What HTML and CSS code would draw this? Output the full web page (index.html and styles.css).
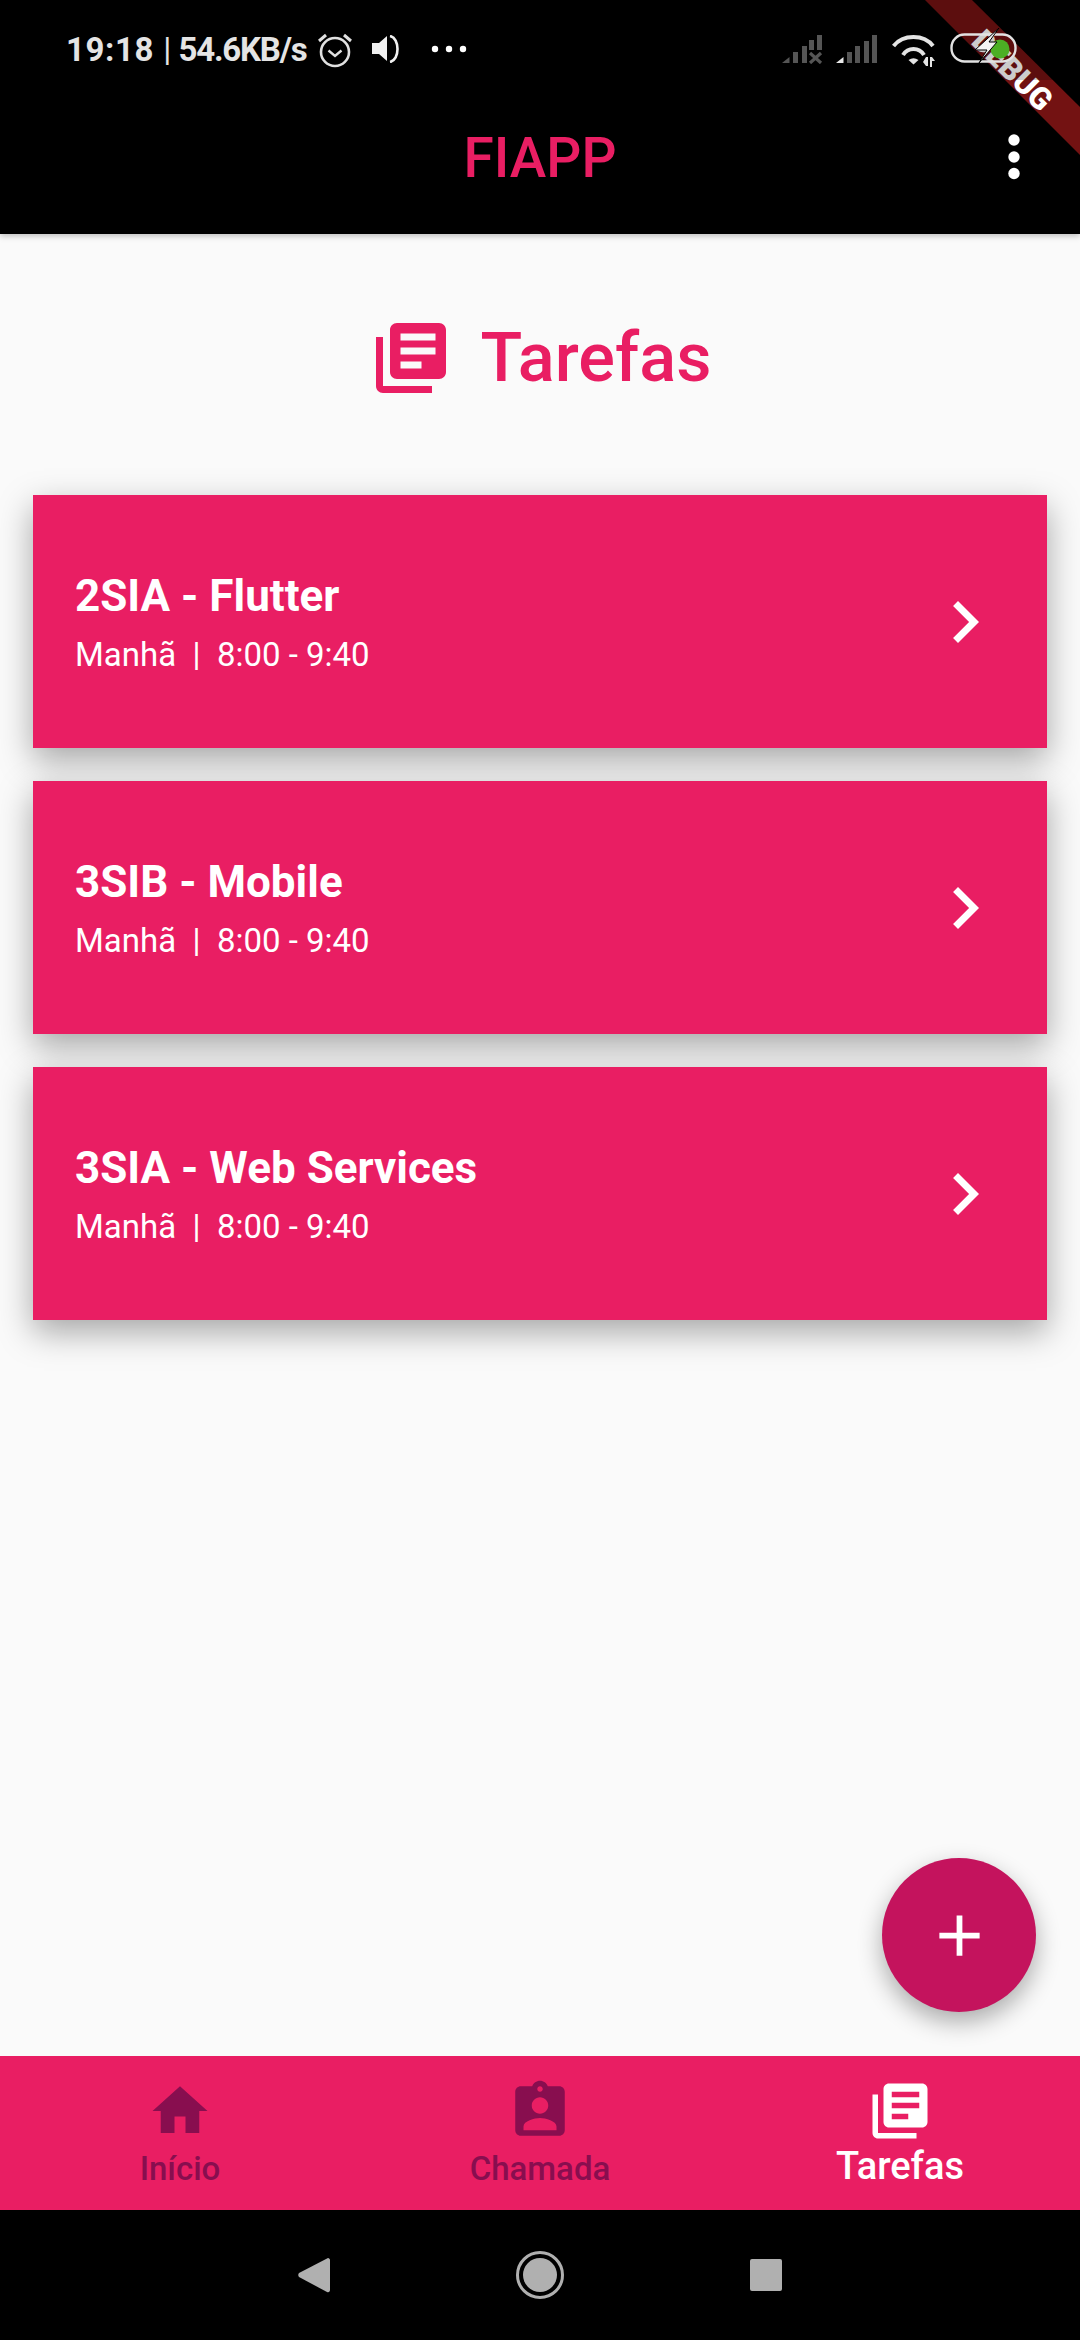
FILE: index.html
```html
<!DOCTYPE html>
<html>
	<head>
		<meta charset="utf-8">
		<title>FIAPP</title>
		<link rel="stylesheet" href="styles.css">
	</head>
	<body>
		<div class="screen">
			<div class="statusbar">
				<span class="clock"><b class="time">19:18</b> <i>|</i> <b class="speed">54.6KB/s</b></span>
				<svg class="ic-alarm" viewBox="0 0 36 36">
					<circle cx="18" cy="20" r="14" fill="none" stroke="#e0e0e0" stroke-width="2.6"/>
					<path d="M11.500 18.500l6.500 5.500 6.500-5.500" fill="none" stroke="#e0e0e0" stroke-width="2.4"/>
					<path d="M2 9l7-6M34 9l-7-6" fill="none" stroke="#e0e0e0" stroke-width="3"/>
				</svg>
				<svg class="ic-volume" viewBox="0 0 30 28">
					<path d="M1 8h7l8-7v25l-8-7H1z" fill="#f0f0f0"/>
					<path d="M19 1c10 2 10 24 0 26" fill="none" stroke="#f0f0f0" stroke-width="2.600"/>
				</svg>
				<svg class="ic-more" viewBox="0 0 36 8">
					<circle cx="4" cy="4" r="3.200" fill="#fff"/>
					<circle cx="18" cy="4" r="3.200" fill="#fff"/>
					<circle cx="32" cy="4" r="3.200" fill="#fff"/>
				</svg>
				<span class="status-right">
					<svg class="ic-signal" viewBox="0 0 41 30">
						<path d="M0 29l7.500-6v6z" fill="#555"/>
						<path d="M11 18h5v11h-5zM20 12h5v17h-5zM27 6h5v10h-5zM35 1h5v15h-5z" fill="#555"/>
						<path d="M28 19l11 10M39 19L28 29" stroke="#555" stroke-width="3.200"/>
					</svg>
					<svg class="ic-signal" viewBox="0 0 41 30">
						<path d="M0 29l7.500-6v6z" fill="#e8e8e8"/>
						<path d="M11 18h5v11h-5zM19 12h5v17h-5zM28 7h5v22h-5zM36 1h5v28h-5z" fill="#555"/>
					</svg>
					<svg class="ic-wifi" viewBox="0 0 44 34">
						<path d="M1.500 13C11 1 32 1 41 13" fill="none" stroke="#e4e4e4" stroke-width="4"/>
						<path d="M11 22c5-8 16-8 21 0" fill="none" stroke="#e4e4e4" stroke-width="4"/>
						<path d="M16.500 27q5-3.500 10 0l-5 4.500z" fill="#e4e4e4"/>
						<path d="M34 24h2v9h-2l-3-4zM38 24h2l3 4h-3v6h-2z" fill="#e4e4e4"/>
					</svg>
					<svg class="ic-battery" viewBox="0 0 68 32">
						<rect x="1.500" y="1.500" width="64" height="27" rx="13" fill="none" stroke="#e2e2e2" stroke-width="2.400"/>
						<circle cx="50" cy="16" r="9.500" fill="#4caf24"/>
						<path d="M49-5L25 17h12l-8 13 18-21h-8z" fill="#f4f4f4" stroke="#000" stroke-width="1"/>
					</svg>
				</span>
			</div>

			<header class="toolbar">
				<span></span>
				<h1 class="toolbar-title">FIAPP</h1>
				<svg class="ic-menu" viewBox="0 0 12 46">
					<circle cx="6" cy="6" r="5.700" fill="#fff"/>
					<circle cx="6" cy="23" r="5.700" fill="#fff"/>
					<circle cx="6" cy="39.500" r="5.700" fill="#fff"/>
				</svg>
			</header>

			<main class="content">
				<div class="heading">
					<svg class="ic-heading" viewBox="0 0 24 24"><path d="M4 6H2v14c0 1.100.9 2 2 2h14v-2H4V6zm16-4H8c-1.100 0-2 .9-2 2v12c0 1.100.9 2 2 2h12c1.100 0 2-.9 2-2V4c0-1.100-.9-2-2-2zm-1 9H9V9h10v2zm-4 4H9v-2h6v2zm4-8H9V5h10v2z"/></svg>
					<h2 class="heading-text">Tarefas</h2>
				</div>

				<div class="cards">
					<div class="card">
						<div class="card-text">
							<div class="card-title">2SIA - Flutter</div>
							<div class="card-sub">Manhã &nbsp;|&nbsp; 8:00 - 9:40</div>
						</div>
						<svg class="ic-chevron" viewBox="0 0 24 24"><path d="M8.590 16.590L13.170 12 8.590 7.410 10 6l6 6-6 6-1.410-1.410z"/></svg>
					</div>
					<div class="card">
						<div class="card-text">
							<div class="card-title">3SIB - Mobile</div>
							<div class="card-sub">Manhã &nbsp;|&nbsp; 8:00 - 9:40</div>
						</div>
						<svg class="ic-chevron" viewBox="0 0 24 24"><path d="M8.590 16.590L13.170 12 8.590 7.410 10 6l6 6-6 6-1.410-1.410z"/></svg>
					</div>
					<div class="card">
						<div class="card-text">
							<div class="card-title">3SIA - Web Services</div>
							<div class="card-sub">Manhã &nbsp;|&nbsp; 8:00 - 9:40</div>
						</div>
						<svg class="ic-chevron" viewBox="0 0 24 24"><path d="M8.590 16.590L13.170 12 8.590 7.410 10 6l6 6-6 6-1.410-1.410z"/></svg>
					</div>
				</div>

				<button class="fab">
					<svg class="ic-add" viewBox="0 0 24 24"><path d="M19 13h-6v6h-2v-6H5v-2h6V5h2v6h6v2z"/></svg>
				</button>
			</main>

			<nav class="bottomnav">
				<div class="nav-item">
					<svg class="nav-icon" viewBox="0 0 24 24"><path d="M10 20v-6h4v6h5v-8h3L12 3 2 12h3v8z"/></svg>
					<span class="nav-label">Início</span>
				</div>
				<div class="nav-item">
					<svg class="nav-icon" viewBox="0 0 24 24"><path d="M19 3h-4.180C14.400 1.840 13.300 1 12 1c-1.300 0-2.400.84-2.820 2H5c-1.100 0-2 .9-2 2v14c0 1.100.9 2 2 2h14c1.100 0 2-.9 2-2V5c0-1.100-.9-2-2-2zm-7 0c.55 0 1 .45 1 1s-.45 1-1 1-1-.45-1-1 .45-1 1-1zm0 4c1.660 0 3 1.340 3 3s-1.340 3-3 3-3-1.340-3-3 1.340-3 3-3zm6 12H6v-1.400c0-2 4-3.100 6-3.100s6 1.100 6 3.100V19z"/></svg>
					<span class="nav-label">Chamada</span>
				</div>
				<div class="nav-item active">
					<svg class="nav-icon" viewBox="0 0 24 24"><path d="M4 6H2v14c0 1.100.9 2 2 2h14v-2H4V6zm16-4H8c-1.100 0-2 .9-2 2v12c0 1.100.9 2 2 2h12c1.100 0 2-.9 2-2V4c0-1.100-.9-2-2-2zm-1 9H9V9h10v2zm-4 4H9v-2h6v2zm4-8H9V5h10v2z"/></svg>
					<span class="nav-label">Tarefas</span>
				</div>
			</nav>

			<div class="systemnav">
				<svg class="sys-back" viewBox="0 0 32 36"><path d="M30 1c1 0 2 1 2 2v30c0 1-1 3-3 2L1 20c-1-1-1-3 0-4z"/></svg>
				<svg class="sys-home" viewBox="0 0 48 48">
					<circle cx="24" cy="24" r="22.500" fill="none" stroke="#b0b0b0" stroke-width="3"/>
					<circle cx="24" cy="24" r="17"/>
				</svg>
				<div class="sys-recent"></div>
			</div>

			<svg class="debug-banner" viewBox="920 0 160 160">
				<polygon points="925,0 972,0 1080,107 1080,155" fill="#731212"/>
				<text class="debug-text" transform="translate(1005 78) rotate(45)" text-anchor="middle">DEBUG</text>
			</svg>
		</div>
	</body>
</html>
```

FILE: styles.css
```css
* {
	box-sizing: border-box;
}
html, body {
	margin: 0;
	padding: 0;
}
body {
	font-family: Roboto, "Liberation Sans", sans-serif;
}
svg {
	display: block;
	flex: none;
}
.screen {
	position: relative;
	display: flex;
	flex-direction: column;
	width: 1080px;
	height: 2340px;
	overflow: hidden;
	background: #000;
}

/* status bar, sits on top of the debug ribbon and darkens it */
.statusbar {
	position: relative;
	z-index: 2;
	display: flex;
	align-items: flex-start;
	height: 80px;
	padding: 0 0 0 66px;
	background: rgba(0, 0, 0, .2);
	color: #e4e4e4;
}
.clock {
	margin-top: 30px;
	width: 250px;
	font-size: 33px;
	line-height: 39px;
	white-space: nowrap;
}
.clock b {
	font-weight: 700;
}
.clock .time {
	letter-spacing: .6px;
}
.clock .speed {
	letter-spacing: -1.200px;
}
.clock i {
	font-style: normal;
	font-weight: 400;
	margin: 0 -1px 0 1px;
}
.ic-alarm {
	width: 36px;
	height: 36px;
	margin: 32px 0 0 1px;
}
.ic-volume {
	width: 30px;
	height: 28px;
	margin: 35px 0 0 18px;
}
.ic-more {
	width: 36px;
	height: 8px;
	margin: 45px 0 0 30px;
}
.status-right {
	display: flex;
	align-items: flex-start;
	margin-left: auto;
	padding-right: 62px;
}
.ic-signal {
	width: 41px;
	height: 30px;
	margin: 34px 13px 0 0;
}
.ic-wifi {
	width: 44px;
	height: 34px;
	margin: 33px 14px 0 2px;
}
.ic-battery {
	width: 68px;
	height: 32px;
	margin-top: 33px;
	overflow: visible;
}

.toolbar {
	display: grid;
	grid-template-columns: 1fr auto 1fr;
	align-items: center;
	height: 154px;
	background: #000;
	box-shadow: 0 2px 6px rgba(0, 0, 0, .25);
	position: relative;
	z-index: 1;
}
.toolbar-title {
	margin: 0;
	padding-top: 2px;
	font-size: 55px;
	font-weight: 500;
	color: #e91e63;
}
.ic-menu {
	justify-self: end;
	width: 12px;
	height: 46px;
	margin-right: 60px;
}

.content {
	position: relative;
	flex: 1;
	padding-top: 82px;
	background: #fafafa;
}
.heading {
	display: flex;
	justify-content: center;
	align-items: center;
	gap: 28px;
	height: 84px;
}
.ic-heading {
	width: 84px;
	height: 84px;
	fill: #e91e63;
}
.heading-text {
	margin: -2px 0 0;
	font-size: 68.500px;
	font-weight: 500;
	color: #e91e63;
}
.cards {
	display: flex;
	flex-direction: column;
	gap: 33px;
	margin: 95px 33px 0;
}
.card {
	display: flex;
	align-items: center;
	justify-content: space-between;
	height: 253px;
	padding: 0 40px 0 42px;
	background: #e91e63;
	box-shadow: 0 12px 32px rgba(0, 0, 0, .34);
}
.card-title {
	font-size: 44px;
	font-weight: 700;
	line-height: 52px;
	color: #fff;
}
.card-sub {
	margin-top: 13px;
	font-size: 33px;
	line-height: 39px;
	color: #fff;
}
.ic-chevron {
	width: 84px;
	height: 84px;
	fill: #fff;
}
.fab {
	position: absolute;
	right: 44px;
	bottom: 44px;
	display: flex;
	align-items: center;
	justify-content: center;
	width: 154px;
	height: 154px;
	padding: 0;
	border: none;
	border-radius: 50%;
	background: #c4135d;
	box-shadow: 0 10px 24px rgba(0, 0, 0, .32);
}
.ic-add {
	width: 69px;
	height: 69px;
	fill: #fff;
}

.bottomnav {
	display: flex;
	height: 154px;
	background: #e91e63;
}
.nav-item {
	flex: 1;
	display: flex;
	flex-direction: column;
	align-items: center;
	padding-top: 22px;
	color: #880e4f;
}
.nav-icon {
	width: 66px;
	height: 66px;
	fill: currentColor;
}
.nav-label {
	margin-top: 5px;
	font-size: 33px;
	font-weight: 500;
	line-height: 39px;
}
.nav-item.active {
	color: #fff;
}
.nav-item.active .nav-label {
	margin-top: 0;
	font-size: 38px;
	line-height: 44px;
}

.systemnav {
	display: flex;
	justify-content: center;
	align-items: center;
	gap: 186px;
	height: 130px;
	background: #000;
}
.sys-back {
	width: 32px;
	height: 36px;
	fill: #b0b0b0;
}
.sys-home {
	width: 48px;
	height: 48px;
	fill: #b0b0b0;
}
.sys-recent {
	width: 32px;
	height: 32px;
	border-radius: 2px;
	background: #b0b0b0;
}

/* debug ribbon over the app, status bar goes above it */
.debug-banner {
	position: absolute;
	top: 0;
	right: 0;
	z-index: 1;
	width: 160px;
	height: 160px;
}
.debug-text {
	font-family: Roboto, sans-serif;
	font-size: 31px;
	font-weight: 900;
	fill: #fff;
}
```
